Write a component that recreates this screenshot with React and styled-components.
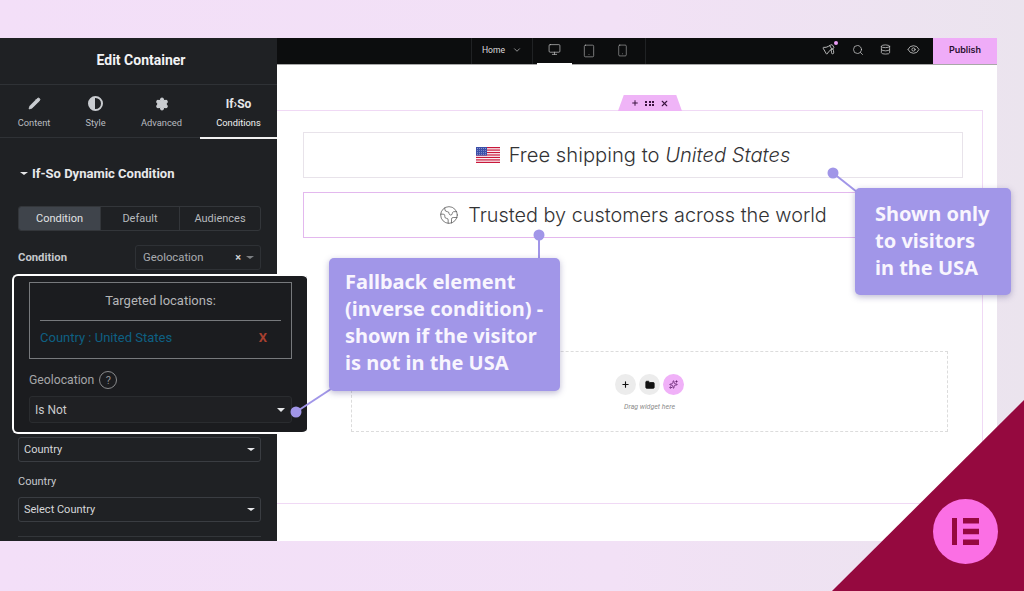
import React from "react";
import styled, { createGlobalStyle } from "styled-components";
import {
  ChevronDown, Monitor, Tablet, Smartphone, Megaphone, Search, Database, Eye,
  Pencil, Settings, Plus, X, Folder, Sparkles, Earth,
} from "lucide-react";

const Global = createGlobalStyle`
  html, body { margin: 0; padding: 0; }
  body {
    width: 1024px;
    height: 591px;
    overflow: hidden;
    background: linear-gradient(90deg, #f3dff8 0%, #f2e1f6 60%, #ebe4ee 100%);
    font-family: "Roboto", "Liberation Sans", sans-serif;
  }
  * { box-sizing: border-box; }
`;

const Page = styled.div`
  position: relative;
  width: 1024px;
  height: 591px;
  padding-top: 38px;
  overflow: hidden;
`;

const Editor = styled.div`
  width: 997px;
  height: 503px;
  display: flex;
  background: #fff;
`;

/* left panel */
const Sidebar = styled.aside`
  width: 277px;
  flex: none;
  background: #1f2124;
  color: #d5d8dc;
  display: flex;
  flex-direction: column;
  overflow: hidden;
`;

const PanelHead = styled.div`
  height: 47px;
  flex: none;
  display: flex;
  align-items: center;
  justify-content: center;
  padding: 0 0 3px 5px;
  font-size: 14px;
  font-weight: 700;
  color: #f2f3f4;
  border-bottom: 1px solid #2f3236;
`;

const Tabs = styled.div`
  height: 53px;
  flex: none;
  display: grid;
  grid-template-columns: 68px 55px 77px 77px;
  border-bottom: 1px solid #2f3236;
`;

const Tab = styled.div`
  display: flex;
  flex-direction: column;
  align-items: center;
  padding-top: 11px;
  gap: 6px;
  font-size: 9.3px;
  height: ${(p) => (p.$active ? "54px" : "52px")};
  color: ${(p) => (p.$active ? "#f0f1f2" : "#b9bcc0")};
  border-bottom: ${(p) => (p.$active ? "2px solid #f1f1f1" : "none")};
`;

const TabIcon = styled.div`
  height: 15px;
  display: flex;
  align-items: center;
  justify-content: center;
  color: #c9ccd0;
`;

const IfSoMark = styled.span`
  font-size: 12px;
  font-weight: 700;
  color: #e6e7e9;
  letter-spacing: 0;
`;

const HalfCircle = styled.div`
  width: 15px;
  height: 15px;
  border-radius: 50%;
  background: linear-gradient(90deg, #c9ccd0 50%, #1f2124 50%);
  border: 2px solid #c9ccd0;
`;

const Section = styled.div`
  padding: 27px 16px 0 18px;
  display: flex;
  flex-direction: column;
`;

const SectionTitle = styled.div`
  display: flex;
  align-items: center;
  gap: 4px;
  padding-left: 2px;
  height: 16px;
  font-size: 13px;
  font-weight: 700;
  color: #e8e9eb;
`;

const Caret = styled.span`
  width: 0;
  height: 0;
  flex: none;
  border-left: ${(p) => p.$size || 4}px solid transparent;
  border-right: ${(p) => p.$size || 4}px solid transparent;
  border-top: ${(p) => (p.$size || 4) - 0.5}px solid ${(p) => p.$color || "#e6e7e9"};
`;

const Segments = styled.div`
  margin-top: 25px;
  height: 25px;
  display: grid;
  grid-template-columns: 81px 79px 1fr;
  border: 1px solid #33363a;
  border-radius: 3px;
  overflow: hidden;
`;

const Segment = styled.div`
  display: flex;
  align-items: center;
  justify-content: center;
  font-size: 11px;
  color: ${(p) => (p.$active ? "#e0e2e4" : "#b6b9bd")};
  background: ${(p) => (p.$active ? "#3f444b" : "transparent")};
  & + & { border-left: 1px solid #33363a; }
`;

const ConditionRow = styled.div`
  margin-top: 14px;
  height: 25px;
  display: flex;
  align-items: center;
  justify-content: space-between;
`;

const RowLabel = styled.span`
  font-size: 11.3px;
  font-weight: 700;
  color: #c5c8cc;
`;

const ChoiceBox = styled.div`
  width: 126px;
  height: 25px;
  border: 1px solid #2e3135;
  border-radius: 3px;
  display: flex;
  align-items: center;
  padding: 0 6px 0 7px;
  gap: 5px;
  font-size: 11.3px;
  color: #a9acb0;
`;

const Grow = styled.span`
  flex: 1;
`;

const ClearMark = styled.span`
  font-size: 11px;
  font-weight: 700;
  color: #cfd1d4;
`;

const Select = styled.div`
  height: ${(p) => p.$h || 25}px;
  margin-top: ${(p) => p.$mt || 0}px;
  border: 1px solid ${(p) => p.$line || "#3a3d42"};
  border-radius: 3px;
  display: flex;
  align-items: center;
  justify-content: space-between;
  padding: 0 5px 0 5px;
  font-size: 11px;
  color: #d6d8da;
`;

const FieldLabel = styled.div`
  margin-top: 13px;
  margin-bottom: 9px;
  font-size: 11px;
  line-height: 13px;
  color: #c5c8cc;
`;

const Rule = styled.div`
  margin-top: 14px;
  height: 1px;
  background: #33363a;
`;

/* highlighted cut-out over the panel */
const Spotlight = styled.div`
  position: absolute;
  left: 12px;
  top: 274px;
  width: 295px;
  height: 160px;
  background: #1b1c1f;
  border: 2px solid #fff;
  border-right: 0;
  border-radius: 6px 5px 5px 6px;
  padding: 6px 15px 0 15px;
`;

const TargetBox = styled.div`
  height: 77px;
  border: 1px solid #77797c;
  padding: 10px 10px 0 10px;
  display: flex;
  flex-direction: column;
`;

const TargetTitle = styled.div`
  font-size: 13px;
  line-height: 16px;
  text-align: center;
  color: #b4b5b7;
`;

const TargetRule = styled.div`
  margin-top: 11px;
  height: 1px;
  background: #77797c;
`;

const TargetRow = styled.div`
  margin-top: 9px;
  display: flex;
  justify-content: space-between;
  align-items: center;
  padding-right: 14px;
  font-size: 13px;
  line-height: 16px;
  color: #0e6083;
`;

const Remove = styled.span`
  font-size: 13px;
  font-weight: 700;
  color: #a8402f;
`;

const GeoLabel = styled.div`
  margin-top: 11px;
  display: flex;
  align-items: center;
  gap: 5px;
  height: 20px;
  font-size: 12.2px;
  color: #a5a6a8;
`;

const HelpMark = styled.span`
  width: 18px;
  height: 18px;
  border-radius: 50%;
  border: 1px solid #8a8b8d;
  display: flex;
  align-items: center;
  justify-content: center;
  font-size: 11px;
  color: #8f9092;
`;

const SpotSelect = styled(Select)`
  margin-top: 6px;
  height: 27px;
  background: #1f2023;
  border-color: #2a2c2f;
  font-size: 12px;
  color: #c9cacc;
  padding-right: 6px;
`;

/* right side */
const Main = styled.div`
  flex: 1;
  display: flex;
  flex-direction: column;
  min-width: 0;
`;

const TopBar = styled.header`
  height: 27px;
  flex: none;
  background: #0c0d0e;
  display: flex;
  align-items: stretch;
  border-bottom: 1px solid #a8a8a8;
`;

const HomeMenu = styled.div`
  margin-left: 194px;
  width: 62px;
  display: flex;
  align-items: center;
  justify-content: center;
  gap: 7px;
  padding-bottom: 2px;
  font-size: 8.6px;
  color: #dcdcdc;
  border-left: 1px solid #202224;
  border-right: 1px solid #202224;
`;

const Devices = styled.div`
  display: flex;
  width: 113px;
  padding-left: 4px;
  border-right: 1px solid #202224;
`;

const Device = styled.div`
  width: ${(p) => p.$w}px;
  display: flex;
  align-items: center;
  justify-content: center;
  padding-bottom: 2px;
  color: #c4c4c4;
  border-bottom: ${(p) => (p.$active ? "2px solid #fff" : "none")};
  margin-bottom: -1px;
`;

const Tools = styled.div`
  margin-left: auto;
  display: flex;
  align-items: center;
  gap: 16px;
  padding: 0 13px 3px 0;
  color: #c8c8c8;
`;

const Bell = styled.div`
  position: relative;
  display: flex;
  svg { transform: rotate(-30deg) scaleX(-1); }
  &::after {
    content: "";
    position: absolute;
    top: -2px;
    right: -2px;
    width: 4px;
    height: 4px;
    border-radius: 50%;
    background: #eb9df5;
  }
`;

const Publish = styled.button`
  width: 64px;
  border: 0;
  padding: 0 0 3px;
  background: #efacf8;
  color: #2a1030;
  font-family: "Inter", "Liberation Sans", sans-serif;
  font-size: 9px;
  font-weight: 600;
`;

const Canvas = styled.div`
  flex: 1;
  padding: 45px 14px 37px 0;
  display: flex;
`;

const Container = styled.section`
  position: relative;
  flex: 1;
  border: 1px solid #f0d9f5;
  border-left: 0;
  padding: 21px 19px 0 26px;
  display: flex;
  flex-direction: column;
`;

const Handle = styled.div`
  position: absolute;
  left: 341px;
  top: -16px;
  width: 64px;
  height: 16px;
  background: #efb4f7;
  clip-path: polygon(9% 0, 91% 0, 100% 100%, 0 100%);
  display: flex;
  align-items: center;
  justify-content: center;
  gap: 6px;
  color: #3a1440;
`;

const DotsGrid = styled.div`
  width: 9px;
  display: grid;
  grid-template-columns: repeat(3, 2px);
  gap: 1px 1.5px;
  span { width: 2px; height: 2px; background: #3a1440; }
`;

const Banner = styled.div`
  height: 46px;
  margin-bottom: ${(p) => p.$mb || 0}px;
  border: 1px solid ${(p) => p.$line};
  display: flex;
  align-items: center;
  justify-content: center;
  gap: 9px;
  padding-bottom: 1px;
  font-family: "Inter", "Noto Sans", sans-serif;
  font-size: ${(p) => p.$size}px;
  font-weight: 300;
  color: #333335;
  em { font-style: italic; }
`;

const DropZone = styled.div`
  margin: 113px 15px 0 48px;
  height: 81px;
  flex: none;
  border: 1px dashed #dcdcdc;
  display: flex;
  flex-direction: column;
  align-items: center;
  padding-top: 22px;
`;

const DropButtons = styled.div`
  display: flex;
  gap: 3px;
`;

const RoundButton = styled.div`
  width: 21px;
  height: 21px;
  border-radius: 50%;
  display: flex;
  align-items: center;
  justify-content: center;
  background: ${(p) => (p.$accent ? "#f0b1f8" : "#ececec")};
  color: ${(p) => (p.$accent ? "#5b1a66" : "#111")};
`;

const DropHint = styled.div`
  margin-top: 8px;
  font-size: 7px;
  font-style: italic;
  color: #8c8c8c;
`;

/* annotations */
const Callout = styled.div`
  position: absolute;
  left: ${(p) => p.$x}px;
  top: ${(p) => p.$y}px;
  width: ${(p) => p.$w}px;
  height: ${(p) => p.$h}px;
  padding: ${(p) => p.$pad};
  background: #a196e8;
  border-radius: 5px;
  box-shadow: 0 2px 6px rgba(70, 60, 130, 0.35);
  font-family: "Noto Sans", "Open Sans", sans-serif;
  font-size: 20px;
  font-weight: 700;
  line-height: 27px;
  color: #f8f5fe;
  white-space: nowrap;
`;

const Connectors = styled.svg`
  position: absolute;
  left: 0;
  top: 0;
  pointer-events: none;
`;

const Corner = styled.div`
  position: absolute;
  right: 0;
  bottom: 0;
  width: 192px;
  height: 191px;
  background: #95093f;
  clip-path: polygon(100% 0, 100% 100%, 0 100%);
`;

const BrandBadge = styled.div`
  position: absolute;
  left: 933px;
  top: 499px;
  width: 65px;
  height: 65px;
  border-radius: 50%;
  background: #fb6fe4;
  display: flex;
  align-items: center;
  justify-content: center;
`;

const Flag = () => (
  <svg width="24" height="16" viewBox="0 0 24 16">
    <rect width="24" height="16" fill="#fff" />
    {[0, 1, 2, 3, 4, 5, 6].map((i) => (
      <rect key={i} y={i * 2.46} width="24" height="1.23" fill="#c8173a" />
    ))}
    <rect width="11" height="8.6" fill="#3c4fa8" />
    {[1.5, 3.6, 5.7, 7.6].map((y) =>
      [1.5, 3.5, 5.5, 7.5, 9.5].map((x) => (
        <circle key={x + "-" + y} cx={x} cy={y} r="0.45" fill="#dfe4fa" />
      ))
    )}
  </svg>
);

const BrandMark = () => (
  <svg width="27" height="27" viewBox="0 0 27 27" fill="#95093f">
    <rect width="5" height="27" />
    <rect x="11" width="16" height="5.5" />
    <rect x="11" y="10.75" width="16" height="5.5" />
    <rect x="11" y="21.5" width="16" height="5.5" />
  </svg>
);

export default function App() {
  return (
    <>
      <Global />
      <Page>
        <Editor>
          <Sidebar>
            <PanelHead>Edit Container</PanelHead>
            <Tabs>
              <Tab>
                <TabIcon><Pencil size={13} fill="#c9ccd0" strokeWidth={1.5} /></TabIcon>
                Content
              </Tab>
              <Tab>
                <TabIcon><HalfCircle /></TabIcon>
                Style
              </Tab>
              <Tab>
                <TabIcon><Settings size={14} fill="#c9ccd0" strokeWidth={2} /></TabIcon>
                Advanced
              </Tab>
              <Tab $active>
                <TabIcon><IfSoMark>If›So</IfSoMark></TabIcon>
                Conditions
              </Tab>
            </Tabs>
            <Section>
              <SectionTitle><Caret $size={4} />If-So Dynamic Condition</SectionTitle>
              <Segments>
                <Segment $active>Condition</Segment>
                <Segment>Default</Segment>
                <Segment>Audiences</Segment>
              </Segments>
              <ConditionRow>
                <RowLabel>Condition</RowLabel>
                <ChoiceBox>
                  Geolocation
                  <Grow />
                  <ClearMark>×</ClearMark>
                  <Caret $size={4} $color="#7d8084" />
                </ChoiceBox>
              </ConditionRow>
              <Select $mt={167}>Country<Caret $size={4} /></Select>
              <FieldLabel>Country</FieldLabel>
              <Select>Select Country<Caret $size={4} /></Select>
              <Rule />
            </Section>
          </Sidebar>

          <Main>
            <TopBar>
              <HomeMenu>Home<ChevronDown size={10} strokeWidth={1.5} /></HomeMenu>
              <Devices>
                <Device $w={35} $active><Monitor size={13} strokeWidth={1.3} /></Device>
                <Device $w={33}><Tablet size={14} strokeWidth={1} /></Device>
                <Device $w={35}><Smartphone size={13} strokeWidth={1} /></Device>
              </Devices>
              <Tools>
                <Bell><Megaphone size={13} strokeWidth={1.5} /></Bell>
                <Search size={12} strokeWidth={1.5} />
                <Database size={11} strokeWidth={1.7} />
                <Eye size={13} strokeWidth={1.5} />
              </Tools>
              <Publish>Publish</Publish>
            </TopBar>
            <Canvas>
              <Container>
                <Handle>
                  <Plus size={8} strokeWidth={3} />
                  <DotsGrid>{[0, 1, 2, 3, 4, 5].map((i) => <span key={i} />)}</DotsGrid>
                  <X size={9} strokeWidth={3} />
                </Handle>
                <Banner $line="#e8e3ea" $mb={14} $size={20.2}>
                  <Flag />
                  <span>Free shipping to <em>United States</em></span>
                </Banner>
                <Banner $line="#e3b8ee" $size={19.85}>
                  <Earth size={20} strokeWidth={0.9} color="#555" />
                  <span>Trusted by customers across the world</span>
                </Banner>
                <DropZone>
                  <DropButtons>
                    <RoundButton><Plus size={9} strokeWidth={3} /></RoundButton>
                    <RoundButton><Folder size={10} fill="#111" /></RoundButton>
                    <RoundButton $accent><Sparkles size={9} /></RoundButton>
                  </DropButtons>
                  <DropHint>Drag widget here</DropHint>
                </DropZone>
              </Container>
            </Canvas>
          </Main>
        </Editor>

        <Spotlight>
          <TargetBox>
            <TargetTitle>Targeted locations:</TargetTitle>
            <TargetRule />
            <TargetRow>Country : United States<Remove>X</Remove></TargetRow>
          </TargetBox>
          <GeoLabel>Geolocation<HelpMark>?</HelpMark></GeoLabel>
          <SpotSelect>Is Not<Caret $size={4.5} /></SpotSelect>
        </Spotlight>

        <Corner />
        <BrandBadge><BrandMark /></BrandBadge>

        <Connectors width="1024" height="591">
          <g stroke="#a196e8" strokeWidth="2" fill="#a196e8">
            <line x1="833" y1="173" x2="857" y2="192" />
            <line x1="539" y1="235" x2="539" y2="260" />
            <line x1="296" y1="412" x2="331" y2="389" />
            <circle cx="833" cy="173" r="4.5" />
            <circle cx="539" cy="235" r="4.5" />
            <circle cx="296" cy="412" r="4.5" />
          </g>
        </Connectors>

        <Callout $x={855} $y={188} $w={156} $h={107} $pad="12px 0 0 20px">
          Shown only<br />to visitors<br />in the USA
        </Callout>
        <Callout $x={329} $y={258} $w={231} $h={133} $pad="10px 0 0 16px">
          Fallback element<br />(inverse condition) -<br />shown if the visitor<br />is not in the USA
        </Callout>
      </Page>
    </>
  );
}
